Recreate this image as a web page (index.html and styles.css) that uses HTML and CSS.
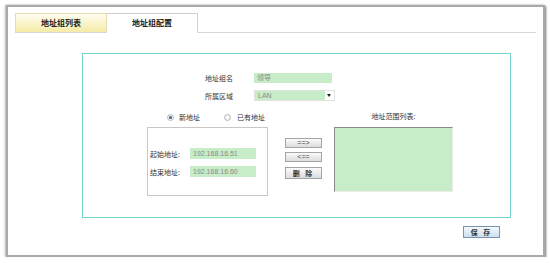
FILE: index.html
```html
<!DOCTYPE html>
<html lang="zh-CN">
<head>
  <meta charset="UTF-8" />
  <title>地址组配置</title>
  <link rel="stylesheet" href="styles.css">
</head>
<body>
  <div class="frame">
    <div class="tabs">
      <div class="tab tab-list">地址组列表</div>
      <div class="tab tab-active">地址组配置</div>
    </div>

    <div class="panel">
      <div class="row row-name">
        <span class="label">地址组名</span>
        <span class="field field-name">领导</span>
      </div>
      <div class="row row-zone">
        <span class="label">所属区域</span>
        <span class="select">
          <span class="select-value">LAN</span>
          <span class="select-arrow"></span>
        </span>
      </div>

      <div class="range">
        <div class="range-left">
          <div class="radios">
            <span class="radio checked"></span><span class="radio-text">新地址</span>
            <span class="radio"></span><span class="radio-text">已有地址</span>
          </div>
          <div class="addr-box">
            <div class="addr-row">
              <span class="addr-label">起始地址:</span>
              <span class="field field-ip">192.168.16.51</span>
            </div>
            <div class="addr-row">
              <span class="addr-label">结束地址:</span>
              <span class="field field-ip">192.168.16.60</span>
            </div>
          </div>
        </div>

        <div class="range-buttons">
          <button class="btn btn-small">==&gt;</button>
          <button class="btn btn-small">&lt;==</button>
          <button class="btn btn-del">删 除</button>
        </div>

        <div class="range-right">
          <div class="list-title">地址范围列表:</div>
          <div class="list-box"></div>
        </div>
      </div>
    </div>

    <div class="actions">
      <button class="btn-save">保 存</button>
    </div>
  </div>
</body>
</html>
```

FILE: styles.css
```css
* {
  box-sizing: border-box;
  margin: 0;
  padding: 0;
}

body {
  background: #fff;
  font-family: "Noto Sans CJK SC", "Liberation Sans", sans-serif;
  font-size: 7px;
  color: #333;
}

.frame {
  margin: 5px 5px 0 6px;
  height: 252px;
  border: 2px solid #a9a9a9;
  box-shadow: 1px 1px 2px #777, -1px 0 2px #bbb;
  padding: 6px 7px 0 7px;
}

/* tabs */
.tabs {
  display: flex;
  height: 20px;
  border-bottom: 1px solid #d6d6d6;
}

.tab {
  width: 92px;
  height: 20px;
  line-height: 18px;
  text-align: center;
  font-weight: bold;
  font-size: 8px;
  color: #222;
}

.tab-list {
  background: linear-gradient(#fffdf0, #f6eba6);
  border: 1px solid #e3dcb4;
  border-bottom-color: #d6d6d6;
}

.tab-active {
  width: 91px;
  background: #fff;
  border: 1px solid #d0d0d0;
  border-left: none;
  border-bottom: 1px solid #fff;
}

/* panel */
.panel {
  margin: 20px 0 0 67px;
  width: 429px;
  height: 165px;
  border: 1px solid #76d2cf;
}

.row {
  display: flex;
  align-items: center;
  height: 11px;
  margin-left: 122px;
}

.row-name {
  margin-top: 18px;
}

.row-zone {
  margin-top: 7px;
}

.label {
  width: 28px;
  text-align: right;
  margin-right: 21px;
  color: #333;
}

.field {
  display: inline-block;
  background: #c7ecc8;
  color: #8a8a8a;
  font-family: "Liberation Sans", "Noto Sans CJK SC", sans-serif;
  padding-left: 3px;
}

.field-name {
  width: 78px;
  height: 10px;
  line-height: 10px;
}

.select {
  display: flex;
  width: 81px;
  height: 11px;
  border: 1px solid #e2e2e2;
  background: #fff;
}

.select-value {
  flex: 1;
  background: #c7ecc8;
  color: #8a8a8a;
  font-family: "Liberation Sans", sans-serif;
  line-height: 9px;
  padding-left: 3px;
}

.select-arrow {
  width: 9px;
  position: relative;
}

.select-arrow:after {
  content: "";
  position: absolute;
  left: 2px;
  top: 3px;
  border-left: 2px solid transparent;
  border-right: 2px solid transparent;
  border-top: 3px solid #222;
}

/* address range area */
.range {
  display: flex;
  margin: 11px 0 0 64px;
}

.radios {
  display: flex;
  align-items: center;
  height: 10px;
  padding-left: 20px;
}

.radio {
  width: 7px;
  height: 7px;
  border: 1px solid #b8b8b8;
  border-radius: 50%;
  background: radial-gradient(#fff, #e6e6e6);
  position: relative;
}

.radio.checked:after {
  content: "";
  position: absolute;
  left: 1px;
  top: 1px;
  width: 3px;
  height: 3px;
  border-radius: 50%;
  background: #3a5f8a;
}

.radio-text {
  margin-left: 5px;
  margin-right: 24px;
  color: #333;
}

.radio-text:last-child {
  margin-left: 6px;
  margin-right: 0;
}

.addr-box {
  margin-top: 5px;
  width: 121px;
  height: 69px;
  border: 1px solid #c8c8c8;
  padding: 20px 0 0 2px;
}

.addr-row {
  display: flex;
  align-items: center;
  height: 11px;
  margin-bottom: 7px;
}

.addr-label {
  width: 40px;
  color: #333;
}

.field-ip {
  width: 66px;
  height: 11px;
  line-height: 11px;
}

.range-buttons {
  display: flex;
  flex-direction: column;
  margin-left: 17px;
  padding-top: 26px;
}

.btn {
  width: 37px;
  border: 1px solid #a5a5a5;
  background: linear-gradient(#fbfbfb, #dcdcdc);
  font-family: "Liberation Sans", "Noto Sans CJK SC", sans-serif;
  font-size: 7px;
  color: #444;
  cursor: pointer;
}

.btn-small {
  height: 10px;
  line-height: 8px;
  margin-bottom: 4px;
}

.btn-del {
  height: 12px;
  margin-top: 1px;
  font-family: "Noto Sans CJK SC", sans-serif;
  font-size: 7px;
  font-weight: bold;
  letter-spacing: 2px;
  color: #333;
}

.range-right {
  margin-left: 12px;
  width: 119px;
}

.list-title {
  height: 10px;
  line-height: 10px;
  text-align: center;
  color: #333;
  margin-top: -1px;
}

.list-box {
  margin-top: 6px;
  height: 65px;
  background: #c7ecc8;
  border-left: 1px solid #8a8a8a;
  border-top: 1px solid #8a8a8a;
  border-right: 1px solid #ececec;
  border-bottom: 1px solid #ececec;
}

/* save */
.actions {
  display: flex;
  justify-content: flex-end;
  margin-top: 8px;
  padding-right: 36px;
}

.btn-save {
  width: 37px;
  height: 12px;
  border: 1px solid #7d93a8;
  background: linear-gradient(#f4f9ff, #c9def2);
  font-family: "Noto Sans CJK SC", sans-serif;
  font-size: 7px;
  font-weight: bold;
  letter-spacing: 2px;
  color: #333;
  cursor: pointer;
}
```
